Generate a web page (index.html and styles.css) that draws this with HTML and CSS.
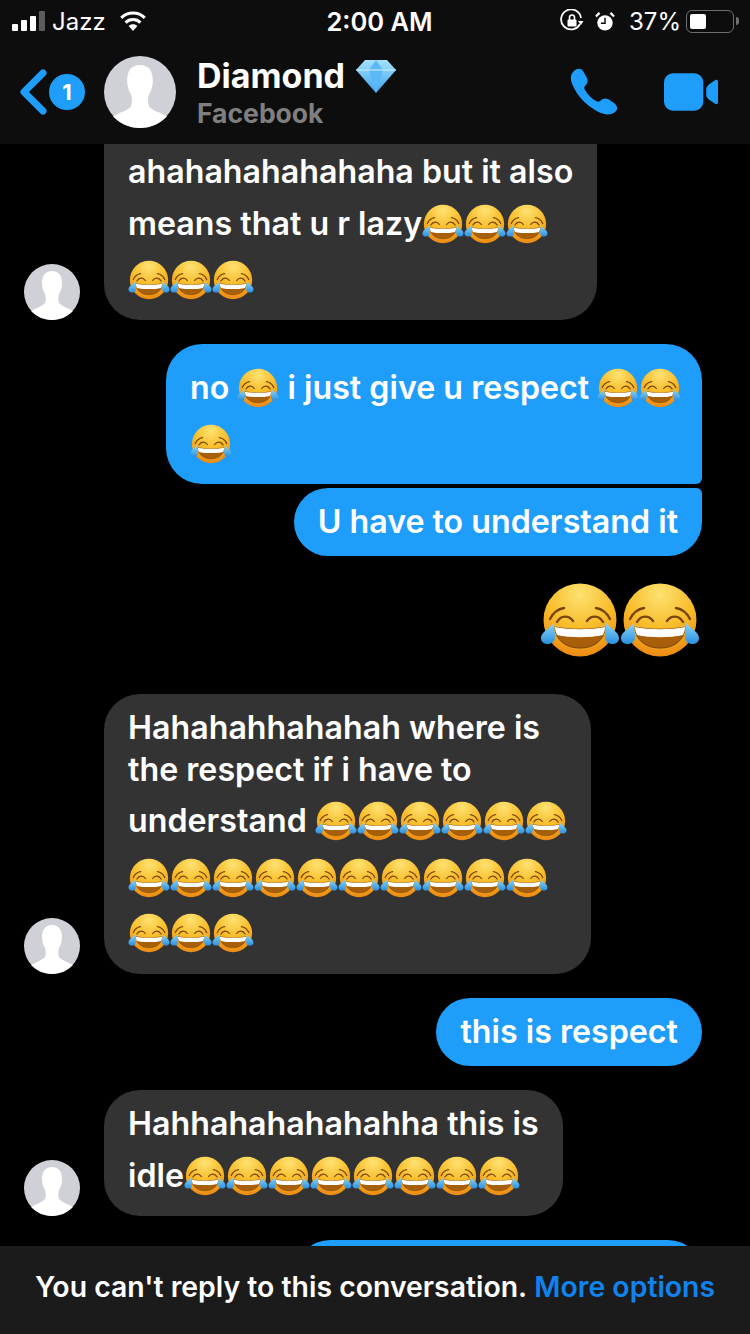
FILE: index.html
```html
<!DOCTYPE html>
<html lang="en">
<head>
  <meta charset="UTF-8">
  <meta name="viewport" content="width=device-width, initial-scale=1.0">
  <title>Diamond</title>
  <link rel="stylesheet" href="styles.css">
</head>
<body>
  <!-- shared laughing emoji -->
  <svg class="sprite" xmlns="http://www.w3.org/2000/svg">
    <defs>
      <radialGradient id="face" cx="50%" cy="15%" r="90%">
        <stop offset="0" stop-color="#fde272"/>
        <stop offset="0.5" stop-color="#f9bd2a"/>
        <stop offset="1" stop-color="#ea8410"/>
      </radialGradient>
      <linearGradient id="tear" x1="0" y1="0" x2="0" y2="1">
        <stop offset="0" stop-color="#8ad6f7"/>
        <stop offset="1" stop-color="#2a8fe0"/>
      </linearGradient>
      <linearGradient id="gem" x1="0" y1="0" x2="0" y2="1">
        <stop offset="0" stop-color="#a5e2fd"/>
        <stop offset="1" stop-color="#3ba3ee"/>
      </linearGradient>
      <symbol id="laugh" viewBox="0 0 80 80">
        <circle cx="40" cy="40" r="36.5" fill="url(#face)"/>
        <path d="M10 39C13 33 18 29 24 28" fill="none" stroke="#7a4408" stroke-width="2.4" stroke-linecap="round"/>
        <path d="M70 39C67 33 62 29 56 28" fill="none" stroke="#7a4408" stroke-width="2.4" stroke-linecap="round"/>
        <path d="M17 42C21 35 29 35 33 41" fill="none" stroke="#7a4408" stroke-width="2.4" stroke-linecap="round"/>
        <path d="M47 41C51 35 59 35 63 42" fill="none" stroke="#7a4408" stroke-width="2.4" stroke-linecap="round"/>
        <path d="M15 47C30 50 50 50 65 47C65 60 54 68 40 68C26 68 15 60 15 47Z" fill="#a85f0a" stroke="#7a4408" stroke-width="1"/>
        <path d="M15 47C30 50 50 50 65 47C65 50 64 53 63 55C50 58 30 58 17 55C16 53 15 50 15 47Z" fill="#fff"/>
        <path d="M14 43C9 49 1 52 1 58C1 62 4 64 8 64C12 64 15 61 15 57C15 52 14 48 14 43Z" fill="url(#tear)"/>
        <path d="M66 43C71 49 79 52 79 58C79 62 76 64 72 64C68 64 65 61 65 57C65 52 66 48 66 43Z" fill="url(#tear)"/>
      </symbol>
      <symbol id="person" viewBox="0 0 56 56">
        <circle cx="28" cy="28" r="28" fill="#cfd1d7"/>
        <path d="M28 7C21 7 18 12 18 19C18 23 19 27 21 30C22 33 22 36 21 39C19 42 12 44 7 47C12 52 19 56 28 56C37 56 44 52 49 47C44 44 37 42 35 39C34 36 34 33 35 30C37 27 38 23 38 19C38 12 35 7 28 7Z" fill="#fff"/>
      </symbol>
    </defs>
  </svg>

  <div class="phone">
    <header class="top-bar">
      <div class="status-bar">
        <div class="status-left">
          <span class="signal"><i class="on h1"></i><i class="on h2"></i><i class="on h3"></i><i class="h4"></i></span>
          <span class="carrier">Jazz</span>
          <svg class="wifi" viewBox="0 0 28 20">
            <path d="M14 20L9.6 15C12 12.6 16 12.6 18.4 15Z" fill="#fff"/>
            <path d="M6.6 11.6C10.6 7.6 17.4 7.6 21.4 11.6" fill="none" stroke="#fff" stroke-width="3"/>
            <path d="M2.2 6.8C8.8 0.4 19.2 0.4 25.8 6.8" fill="none" stroke="#fff" stroke-width="3"/>
          </svg>
        </div>
        <div class="status-time">2:00 AM</div>
        <div class="status-right">
          <svg class="rotation" viewBox="0 0 24 24">
            <path d="M20 15A10 10 0 1 1 21 9" fill="none" stroke="#fff" stroke-width="1.8"/>
            <path d="M23.5 12L18 12L21 16Z" fill="#fff"/>
            <rect x="7.5" y="10.5" width="9" height="7" rx="1" fill="#fff"/>
            <path d="M9.5 11V8.5A2.5 2.5 0 0 1 14.5 8.5V11" fill="none" stroke="#fff" stroke-width="1.6"/>
          </svg>
          <svg class="alarm" viewBox="0 0 22 22">
            <circle cx="11" cy="12.5" r="8.5" fill="#fff"/>
            <path d="M11 7V13H6.5" fill="none" stroke="#0b0b0b" stroke-width="1.6"/>
            <path d="M1 5.5L5 1.5M21 5.5L17 1.5" stroke="#fff" stroke-width="2.4"/>
          </svg>
          <span class="percent">37%</span>
          <span class="battery"><span class="battery-level"></span></span>
          <span class="battery-tip"></span>
        </div>
      </div>
      <nav class="nav-bar">
        <svg class="back" viewBox="0 0 28 46">
          <path d="M24 4L5 23L24 42" fill="none" stroke="#1e9dfb" stroke-width="7" stroke-linecap="round" stroke-linejoin="round"/>
        </svg>
        <span class="back-count">1</span>
        <svg class="nav-avatar"><use href="#person"/></svg>
        <div class="contact">
          <div class="contact-name">
            Diamond
            <svg class="gem" viewBox="0 0 40 34">
              <path d="M9 1H31L40 11L20 34L0 11Z" fill="url(#gem)"/>
              <path d="M13 11L20 1L27 11L20 34Z" fill="#5db9f5"/>
              <path d="M0 11H40" stroke="#d6f2ff" stroke-width="1"/>
            </svg>
          </div>
          <div class="contact-source">Facebook</div>
        </div>
        <div class="nav-actions">
          <svg class="phone-icon" viewBox="0 0 48 48">
            <path d="M4 3C7 0 11 0 13 3L17 10C18 13 18 15 15 18C14 19 14 20 15 22C18 27 21 30 26 33C28 34 29 34 30 33C33 30 35 30 38 31L44 35C48 38 48 42 45 44C41 48 33 47 25 42C15 36 7 27 3 18C0 11 0 7 4 3Z" fill="#1e9dfb"/>
          </svg>
          <svg class="video-icon" viewBox="0 0 56 38">
            <rect x="0" y="0" width="40" height="38" rx="9" fill="#1e9dfb"/>
            <path d="M43 16C43 14 44 13 46 11L52 7C54 6 55 7 55 9V29C55 31 54 32 52 31L46 27C44 25 43 24 43 22Z" fill="#1e9dfb"/>
          </svg>
        </div>
      </nav>
    </header>

    <main class="thread">
      <div class="messages">
        <div class="row incoming">
          <svg class="avatar"><use href="#person"/></svg>
          <div class="bubble gray first-bubble">
            <div class="line h52">ahahahahahahaha but it also</div>
            <div class="line h52">means that u r lazy<svg class="emoji"><use href="#laugh"/></svg><svg class="emoji"><use href="#laugh"/></svg><svg class="emoji"><use href="#laugh"/></svg></div>
            <div class="line h60"><svg class="emoji"><use href="#laugh"/></svg><svg class="emoji"><use href="#laugh"/></svg><svg class="emoji"><use href="#laugh"/></svg></div>
          </div>
        </div>

        <div class="row outgoing gap-24">
          <div class="bubble blue tail-bottom respect-bubble">
            <div class="line h56">no <svg class="emoji"><use href="#laugh"/></svg> i just give u respect <svg class="emoji"><use href="#laugh"/></svg><svg class="emoji"><use href="#laugh"/></svg></div>
            <div class="line h56"><svg class="emoji"><use href="#laugh"/></svg></div>
          </div>
        </div>
        <div class="row outgoing gap-4">
          <div class="bubble blue tail-top single">U have to understand it</div>
        </div>
        <div class="row outgoing big-row">
          <svg class="emoji-big"><use href="#laugh"/></svg><svg class="emoji-big"><use href="#laugh"/></svg>
        </div>

        <div class="row incoming gap-34">
          <svg class="avatar"><use href="#person"/></svg>
          <div class="bubble gray long-bubble">
            <div class="line h42">Hahahahhahahah where is</div>
            <div class="line h42">the respect if i have to</div>
            <div class="line h60">understand <svg class="emoji"><use href="#laugh"/></svg><svg class="emoji"><use href="#laugh"/></svg><svg class="emoji"><use href="#laugh"/></svg><svg class="emoji"><use href="#laugh"/></svg><svg class="emoji"><use href="#laugh"/></svg><svg class="emoji"><use href="#laugh"/></svg></div>
            <div class="line h54"><svg class="emoji"><use href="#laugh"/></svg><svg class="emoji"><use href="#laugh"/></svg><svg class="emoji"><use href="#laugh"/></svg><svg class="emoji"><use href="#laugh"/></svg><svg class="emoji"><use href="#laugh"/></svg><svg class="emoji"><use href="#laugh"/></svg><svg class="emoji"><use href="#laugh"/></svg><svg class="emoji"><use href="#laugh"/></svg><svg class="emoji"><use href="#laugh"/></svg><svg class="emoji"><use href="#laugh"/></svg></div>
            <div class="line h56"><svg class="emoji"><use href="#laugh"/></svg><svg class="emoji"><use href="#laugh"/></svg><svg class="emoji"><use href="#laugh"/></svg></div>
          </div>
        </div>

        <div class="row outgoing gap-24">
          <div class="bubble blue single">this is respect</div>
        </div>

        <div class="row incoming gap-24">
          <svg class="avatar"><use href="#person"/></svg>
          <div class="bubble gray idle-bubble">
            <div class="line h52">Hahhahahahahahha this is</div>
            <div class="line h52">idle<svg class="emoji"><use href="#laugh"/></svg><svg class="emoji"><use href="#laugh"/></svg><svg class="emoji"><use href="#laugh"/></svg><svg class="emoji"><use href="#laugh"/></svg><svg class="emoji"><use href="#laugh"/></svg><svg class="emoji"><use href="#laugh"/></svg><svg class="emoji"><use href="#laugh"/></svg><svg class="emoji"><use href="#laugh"/></svg></div>
          </div>
        </div>

        <div class="row outgoing gap-24">
          <div class="bubble blue cut-bubble"></div>
        </div>
      </div>
    </main>

    <footer class="notice">
      You can't reply to this conversation.&nbsp;<span class="notice-link">More options</span>
    </footer>
  </div>
</body>
</html>
```

FILE: styles.css
```css
:root {
  --color-blue: #1e9dfb;
  --color-gray: #333333;
  --color-bar: #0d0d0d;
  --bubble-radius: 36px;
  --font-primary: Inter, "Noto Sans", "Liberation Sans", sans-serif;
}

* {
  box-sizing: border-box;
  margin: 0;
  padding: 0;
}

body {
  font-family: var(--font-primary);
  background-color: #000;
  color: #fff;
  -webkit-font-smoothing: antialiased;
}

/* kept rendered (not display:none) so the gradients resolve */
.sprite {
  display: block;
  width: 0;
  height: 0;
}

.phone {
  width: 750px;
  height: 1334px;
  display: flex;
  flex-direction: column;
  overflow: hidden;
}

/* Top bar */
.top-bar {
  height: 144px;
  flex-shrink: 0;
  background-color: var(--color-bar);
}

.status-bar {
  height: 40px;
  display: grid;
  grid-template-columns: 1fr auto 1fr;
  align-items: center;
  padding: 2px 11px 0 12px;
  font-size: 24px;
}

.status-left {
  display: flex;
  align-items: center;
}

.signal {
  display: flex;
  align-items: flex-end;
  gap: 3px;
  height: 20px;
}

.signal i {
  display: block;
  width: 6px;
  border-radius: 1px;
  background-color: #5c5c5c;
}

.signal i.on {
  background-color: #fff;
}

.signal .h1 { height: 7px; }
.signal .h2 { height: 11px; }
.signal .h3 { height: 15px; }
.signal .h4 { height: 20px; }

.carrier {
  margin-left: 7px;
  font-weight: 400;
}

.wifi {
  width: 28px;
  height: 20px;
  margin-left: 13px;
}

.status-time {
  margin-left: 8px;
  font-size: 25.5px;
  font-weight: 600;
}

.status-right {
  display: flex;
  align-items: center;
  justify-content: flex-end;
}

.rotation {
  width: 24px;
  height: 24px;
}

.alarm {
  width: 20px;
  height: 21px;
  margin-left: 11px;
}

.percent {
  margin-left: 14px;
  font-weight: 400;
}

.battery {
  width: 48px;
  height: 23px;
  margin-left: 5px;
  padding: 3px;
  border: 1.5px solid #6e6e6e;
  border-radius: 6px;
}

.battery-level {
  display: block;
  width: 16px;
  height: 100%;
  border-radius: 2px;
  background-color: #fff;
}

.battery-tip {
  width: 3px;
  height: 8px;
  margin-left: 2px;
  border-radius: 0 3px 3px 0;
  background-color: #6e6e6e;
}

.nav-bar {
  height: 104px;
  display: flex;
  align-items: center;
  padding: 0 31px 0 19px;
}

.back {
  width: 28px;
  height: 46px;
  flex-shrink: 0;
}

.back-count {
  width: 36px;
  height: 36px;
  margin-left: 2px;
  border-radius: 50%;
  background-color: var(--color-blue);
  font-size: 22px;
  font-weight: 700;
  display: flex;
  align-items: center;
  justify-content: center;
}

.nav-avatar {
  width: 72px;
  height: 72px;
  margin-left: 19px;
  flex-shrink: 0;
}

.contact {
  margin-left: 21px;
  padding-top: 2px;
  flex: 1;
}

.contact-name {
  display: flex;
  align-items: center;
  gap: 11px;
  font-size: 34px;
  font-weight: 700;
  line-height: 40px;
}

.gem {
  width: 40px;
  height: 34px;
}

.contact-source {
  font-size: 26.5px;
  font-weight: 700;
  line-height: 34px;
  color: #7f7f7f;
}

.nav-actions {
  display: flex;
  align-items: center;
  gap: 46px;
}

.phone-icon {
  width: 48px;
  height: 48px;
}

.video-icon {
  width: 55px;
  height: 38px;
}

/* Messages */
.thread {
  flex: 1;
  overflow: hidden;
}

/* the first bubble is scrolled partly under the top bar */
.messages {
  margin-top: -44px;
  display: flex;
  flex-direction: column;
}

.row {
  display: flex;
}

.row.incoming {
  align-items: flex-end;
  padding-left: 24px;
}

.row.outgoing {
  justify-content: flex-end;
  padding-right: 48px;
}

.gap-4 { margin-top: 4px; }
.gap-24 { margin-top: 24px; }
.gap-34 { margin-top: 34px; }

.avatar {
  width: 56px;
  height: 56px;
  flex-shrink: 0;
  margin-right: 24px;
}

.bubble {
  border-radius: var(--bubble-radius);
  font-size: 32.2px;
  font-weight: 600;
  white-space: nowrap;
}

.bubble.gray,
.bubble.blue {
  padding-left: 24px;
  padding-right: 24px;
}

.bubble.gray {
  background-color: var(--color-gray);
}

.bubble.blue {
  background-color: var(--color-blue);
}

.h42 { height: 42px; line-height: 42px; }
.h52 { height: 52px; line-height: 52px; }
.h54 { height: 54px; line-height: 54px; }
.h56 { height: 56px; line-height: 56px; }
.h60 { height: 60px; line-height: 60px; }

.emoji {
  width: 42px;
  height: 42px;
  vertical-align: -10px;
}

.first-bubble {
  width: 493px;
  padding-top: 46px;
  padding-bottom: 10px;
}

.respect-bubble {
  width: 536px;
  height: 140px;
  padding-top: 16px;
}

.long-bubble {
  width: 487px;
  padding-top: 13px;
  padding-bottom: 13px;
}

.idle-bubble {
  width: 459px;
  padding-top: 8px;
  padding-bottom: 14px;
}

.single {
  height: 68px;
  display: flex;
  align-items: center;
  padding-bottom: 2px;
}

.tail-bottom {
  border-bottom-right-radius: 6px;
}

.tail-top {
  border-top-right-radius: 6px;
}

.big-row {
  margin-top: 24px;
}

.row.big-row {
  padding-right: 50px;
}

.emoji-big {
  width: 80px;
  height: 80px;
}

.cut-bubble {
  width: 406px;
  height: 68px;
}

/* Bottom notice */
.notice {
  height: 88px;
  flex-shrink: 0;
  padding-bottom: 8px;
  background-color: #1b1b1b;
  display: flex;
  align-items: center;
  justify-content: center;
  font-size: 28.4px;
  font-weight: 600;
  white-space: nowrap;
}

.notice-link {
  color: #0f84ee;
}
```
